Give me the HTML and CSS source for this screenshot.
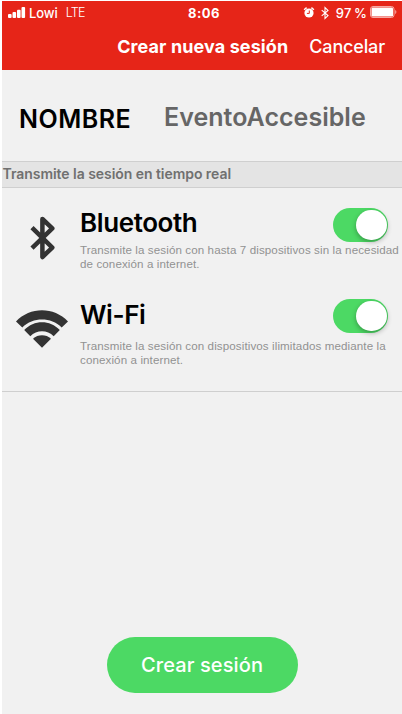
FILE: index.html
```html
<!DOCTYPE html>
<html lang="es">
<head>
<meta charset="utf-8">
<title>Crear nueva sesión</title>
<link rel="stylesheet" href="styles.css">
</head>
<body>
<main class="screen">
  <header class="header">
    <div class="status">
      <div class="status-left">
        <svg class="signal" viewBox="0 0 17 11"><rect x="0" y="7" width="3.6" height="4" rx="1"/><rect x="4.5" y="5" width="3.6" height="6" rx="1"/><rect x="9" y="2.8" width="3.6" height="8.2" rx="1"/><rect x="13.5" y="0" width="3.6" height="11" rx="1"/></svg>
        <span class="carrier">Lowi</span><span class="network">LTE</span>
      </div>
      <span class="time">8:06</span>
      <div class="status-right">
        <svg class="alarm" viewBox="0 0 10 11"><circle cx="5" cy="6" r="4.6" fill="#fff"/><path d="M.1 2.8 2.6.6M9.9 2.8 7.4.6" stroke="#fff" stroke-width="1.4" fill="none"/><path d="M5.3 3.5V6.4H2.9" stroke="#e62518" stroke-width="1" fill="none"/></svg>
        <svg class="bt-small" viewBox="0 0 8 12"><path d="M.7 3.2 7 8.6 4 11.4V.6L7 3.4.7 8.8" stroke="#fff" stroke-width="1.1" fill="none"/></svg>
        <span class="percent">97 %</span>
        <svg class="battery" viewBox="0 0 27 12"><rect x=".5" y=".5" width="23.5" height="11" rx="2.5" fill="none" stroke="#f6aaa4"/><rect x="1.5" y="1.5" width="21.5" height="9" rx="1.2" fill="#fff"/><path d="M25.2 4v4c1.6-.7 1.6-3.3 0-4z" fill="#f6aaa4"/></svg>
      </div>
    </div>
    <nav class="nav">
      <h1 class="title">Crear nueva sesión</h1>
      <a class="cancel">Cancelar</a>
    </nav>
  </header>
  <section class="name-row">
    <label class="name-label">NOMBRE</label>
    <span class="name-value">EventoAccesible</span>
  </section>
  <h2 class="band"><span>Transmite la sesión en tiempo real</span></h2>
  <section class="options">
    <article class="option bluetooth">
      <div class="icon"><svg class="bt" viewBox="0 0 28 46"><path d="M4 12.7 24.3 32.6 14.4 42V4L24.3 13.4 4 33.1" fill="none" stroke="#333" stroke-width="4.5" stroke-linejoin="round"/></svg></div>
      <div class="body">
        <div class="head"><h3>Bluetooth</h3><span class="switch"></span></div>
        <p><span>Transmite la sesión con hasta 7 dispositivos sin la necesidad</span><br><span>de conexión a internet.</span></p>
      </div>
    </article>
    <article class="option wifi">
      <div class="icon"><svg class="wf" viewBox="0 0 54 40" fill="#333"><path d="M1 12.5C15-2.5 39-2.5 53 12.5L46.7 18.4C36 7.8 18 7.8 7.3 18.4z"/><path d="M9.2 21C19 10.6 35 10.6 44.8 21L38.7 27.2C32.3 20.6 21.7 20.6 15.3 27.2z"/><path d="M18 29.8C23 25.2 31 25.2 36 29.8L27 38.7z"/></svg></div>
      <div class="body">
        <div class="head"><h3>Wi-Fi</h3><span class="switch"></span></div>
        <p><span>Transmite la sesión con dispositivos ilimitados mediante la</span><br><span>conexión a internet.</span></p>
      </div>
    </article>
  </section>
  <footer class="footer"><button class="create">Crear sesión</button></footer>
</main>
</body>
</html>
```
FILE: styles.css
```css
* { box-sizing: border-box; }
body { margin: 0; background: #fff; font-family: Inter, "Liberation Sans", sans-serif; }
h1, h2, h3, p { margin: 0; }
svg { display: block; flex: none; overflow: visible; }
.screen { height: 713px; margin: 1px 0 0 2px; background: #f1f1f1; display: flex; flex-direction: column; white-space: nowrap; overflow: hidden; }
.header { height: 69px; background: #e62518; color: #fff; flex: none; }
.status { height: 23px; display: grid; grid-template-columns: 1fr auto 1fr; align-items: center; font-size: 13px; padding: 0 5px 0 6px; }
.status-left, .status-right { display: flex; align-items: center; }
.status-right { justify-content: flex-end; }
.signal { width: 17px; height: 11px; fill: #fff; margin: -1px 4px 0 0; }
.carrier { font-size: 13px; font-weight: 500; letter-spacing: -.1px; }
.network { margin-left: 8px; font-weight: 300; letter-spacing: -.7px; font-size: 12.5px; }
.time { font-weight: 700; letter-spacing: .5px; padding-left: 3px; }
.alarm { width: 10px; height: 11px; margin: -1px 7px 0 0; }
.bt-small { width: 8px; height: 12px; margin-right: 7px; }
.percent { margin-right: 3px; font-weight: 500; word-spacing: -1px; letter-spacing: .1px; }
.battery { width: 27px; height: 12px; margin-top: -1px; }
.nav { height: 46px; display: flex; justify-content: flex-end; align-items: center; padding: 0 17px 1px 0; }
.title { font-size: 18px; font-weight: 700; letter-spacing: .1px; }
.cancel { font-size: 18px; font-weight: 500; margin-left: 21px; letter-spacing: -.15px; }
.name-row { height: 91px; display: flex; padding: 0 0 0 17px; flex: none; }
.name-label { width: 145px; padding-top: 32px; line-height: 34px; font-size: 25px; font-weight: 600; letter-spacing: .5px; color: #000; }
.name-value { padding-top: 30px; line-height: 34px; font-size: 25px; font-weight: 600; letter-spacing: .03px; color: #666; }
.band { height: 27px; flex: none; background: #e4e4e4; border: solid #cfcfcf; border-width: 1px 0; font-size: 14px; line-height: 24px; font-weight: 600; letter-spacing: -.05px; color: #707070; padding-left: .5px; }
.options { height: 204px; flex: none; border-bottom: 1px solid #cfcfcf; padding-top: 20px; }
.option { height: 91px; display: flex; }
.icon { width: 78px; flex: none; }
.bt { width: 28px; height: 46px; margin: 7px 0 0 26px; }
.wf { width: 54px; height: 40px; margin: 10px 0 0 13px; }
.body { flex: 1; }
.head { display: flex; justify-content: space-between; padding-right: 14px; height: 34px; }
h3 { font-size: 26px; line-height: 30px; font-weight: 600; letter-spacing: -.4px; color: #000; }
.wifi h3 { line-height: 32px; }
.switch { width: 55px; height: 34px; border-radius: 17px; background: #4cd964; display: flex; justify-content: flex-end; padding: 1.5px; }
.switch::after { content: ""; width: 30.5px; height: 30.5px; border-radius: 50%; background: #fff; box-shadow: 0 2px 5px rgba(0,0,0,.3); }
p { font: 11.6px/14px "Liberation Sans", sans-serif; letter-spacing: .1px; color: #929292; padding-top: 1px; }
.wifi p { padding-top: 6px; }
.footer { margin-top: auto; display: flex; justify-content: center; padding-bottom: 21px; }
.create { width: 191px; height: 56px; border: 0; border-radius: 28px; background: #4cd964; color: #fff; font: 500 20px Inter, sans-serif; letter-spacing: .1px; padding: 0; }
```
